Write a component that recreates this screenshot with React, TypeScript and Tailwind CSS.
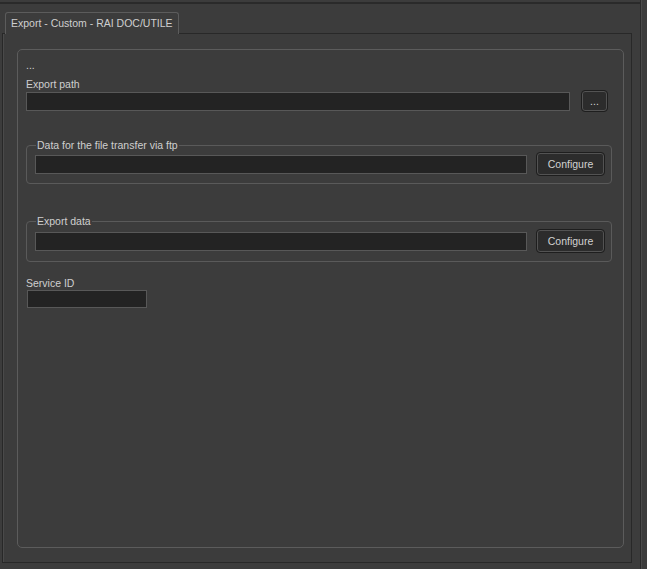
import React from "react";

const font = { fontFamily: '"Liberation Sans", Arial, sans-serif' };

function Btn({ label, w, h }: { label: string; w: string; h: string }) {
  return (
    <button
      className={`${w} ${h} shrink-0 rounded-[4px] border border-[#1e1e1e] bg-[#2c2c2c] shadow-[inset_0_0_0_1px_#535353] text-[10.5px] leading-[13px] text-[#d2d2d2] flex items-center justify-center`}
    >
      {label}
    </button>
  );
}

function Input({ cls }: { cls: string }) {
  return <div className={`${cls} bg-[#232323] border border-[#585858]`} />;
}

function Group({ title, cls }: { title: string; cls: string }) {
  return (
    <fieldset className={`${cls} mr-[11px] border border-[#5a5a5a] rounded-[4px] pl-[8px] pr-[6px]`}>
      <legend className="ml-[1px] px-[1px] text-[10.5px] leading-[13px] text-[#cfcfcf]">{title}</legend>
      <div className="flex items-center gap-[9px]">
        <Input cls="flex-1 h-[19px]" />
        <Btn label="Configure" w="w-[69px]" h="h-[24px]" />
      </div>
    </fieldset>
  );
}

export default function App() {
  return (
    <div style={font} className="w-[647px] h-[569px] bg-[#3c3c3c] flex overflow-hidden">
      <div className="w-[640px] flex flex-col pt-[2px]">
        <div className="flex-1 border-t-2 border-[#2a2a2a] flex flex-col pl-[2px] pr-[8px] pb-[6px]">
          <div className="flex pl-[3px] pt-[8px]">
            <div className="relative z-10 -mb-px h-[22px] px-[5px] border border-b-0 border-[#5c5c5c] rounded-t-[3px] bg-[#3c3c3c] text-[10.5px] leading-[20px] text-[#cfcfcf]">
              Export - Custom - RAI DOC/UTILE
            </div>
          </div>
          <div className="flex-1 border border-[#282828] shadow-[inset_1px_0_0_#4a4a4a] pl-[14px] pr-[8px] pt-[15px] pb-[14px] flex">
            <div className="flex-1 border border-[#5c5c5c] rounded-[5px] pl-[8px] pt-[9px] text-[#cfcfcf] text-[10.5px] leading-[13px]">
              <div>...</div>
              <div className="mt-[6px]">Export path</div>
              <div className="-mt-[1px] flex items-center gap-[11px] pr-[15px]">
                <Input cls="w-[544px] h-[19px]" />
                <Btn label="..." w="w-[27px]" h="h-[22px]" />
              </div>
              <Group title="Data for the file transfer via ftp" cls="mt-[27px] pt-0 pb-[7px]" />
              <Group title="Export data" cls="mt-[31px] pt-[1px] pb-[8px]" />
              <div className="mt-[15px]">Service ID</div>
              <div className="ml-[1px]">
                <Input cls="w-[120px] h-[18px]" />
              </div>
            </div>
          </div>
        </div>
      </div>
      <div className="flex-1 border-l border-[#2a2a2a] shadow-[inset_1px_0_0_#4a4a4a]" />
    </div>
  );
}
